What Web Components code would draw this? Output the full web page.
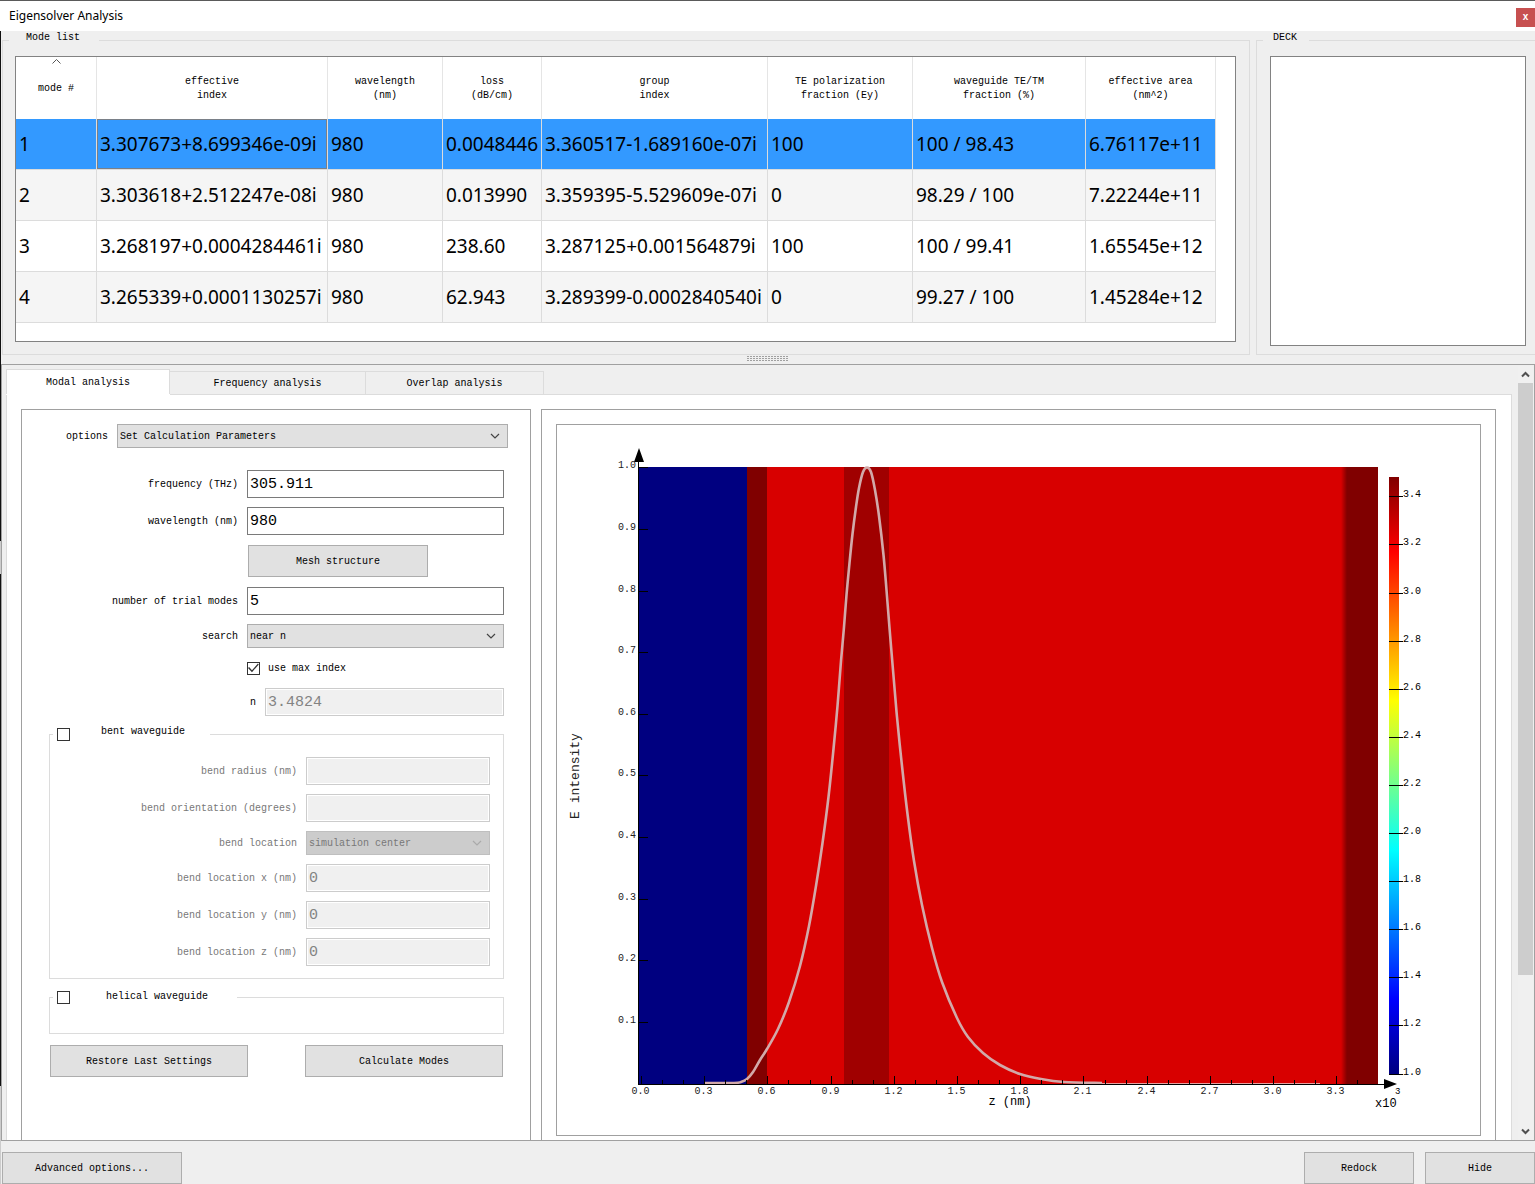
<!DOCTYPE html>
<html lang="en">
<head>
<meta charset="utf-8">
<title>Eigensolver Analysis</title>
<style>
  html, body { margin: 0; height: 100%; }
  body { background: #efefef; color: #000; font: 10px/14px "Liberation Mono", monospace; }
</style>
</head>
<body>
<eigen-app></eigen-app>

<script>
const define = (name, render) => customElements.define(name, class extends HTMLElement {
  connectedCallback() {
    if (this.shadowRoot) return;
    const root = this.attachShadow({ mode: 'open' });
    root.innerHTML = '<style>*{box-sizing:border-box}:host{display:block;box-sizing:border-box}</style>' + render(this);
  }
});

/* push button */
define('es-button', () => `
  <style>
    :host { width: 180px; height: 32px; flex: none; }
    button { width: 100%; height: 100%; padding: 2px 0 0; font: inherit; color: inherit;
      background: #e1e1e1; border: 1px solid #adadad; border-radius: 0; }
  </style>
  <button type="button"><slot></slot></button>`);

/* labelled text box or drop-down */
define('es-field', el => {
  const off = el.hasAttribute('disabled') ? 'disabled' : '';
  const value = el.getAttribute('value') || '';
  const control = el.hasAttribute('select')
    ? `<span class="combo"><select id="c" ${off}><option>${value}</option></select>
        <svg viewBox="0 0 10 6" width="10" height="6"><path d="M1 1l4 4 4-4" fill="none" stroke="currentColor" stroke-width="1.2"/></svg></span>`
    : `<input id="c" type="text" value="${value}" ${off}>`;
  return `
  <style>
    :host { display: flex; align-items: center; gap: 9px; }
    label { flex: 1; padding-top: 2px; text-align: right; white-space: nowrap; }
    :host([disabled]:not([dark-label])) label { color: #787878; }
    input { width: var(--field, 257px); height: 28px; margin: 0; padding: 0 2px; border: 1px solid #7a7a7a;
      background: #fff; color: #000; font: 15px "Liberation Mono", monospace; border-radius: 0; }
    input:disabled { background: #f0f0f0; border-color: #ccc; color: #838383; box-shadow: inset 0 0 0 1px #fff; }
    .combo { display: grid; align-items: center; width: var(--field, 257px); height: 24px; color: #444; }
    .combo > * { grid-area: 1 / 1; }
    .combo svg { justify-self: end; margin-right: 8px; pointer-events: none; }
    select { appearance: none; width: 100%; height: 100%; margin: 0; padding: 2px 2px 0; border: 1px solid #adadad;
      border-radius: 0; background: #e1e1e1; color: #000; font: inherit; font-size: 10px; }
    select:disabled { background: #ccc; border-color: #bfbfbf; color: #787878; opacity: 1; }
    select:disabled + svg { color: #aaa; }
  </style>
  <label for="c">${el.getAttribute('label')}</label>${control}`;
});

/* tick box, optionally with a caption */
define('es-check', el => `
  <style>
    :host { display: flex; }
    label { display: flex; align-items: center; gap: 8px; }
    label span { padding-top: 2px; }
    label.legend { gap: 0; }
    .legend span { padding: 0 var(--cap-end) var(--cap-lift, 0) var(--cap-start); }
    input { appearance: none; flex: none; width: 13px; height: 13px; margin: 0; border: 1px solid #333; background: #fff; }
    input:checked::before { content: ""; display: block; width: 11px; height: 11px; background: #333;
      clip-path: polygon(0 50%, 10% 42%, 36% 70%, 90% 10%, 98% 18%, 36% 88%); }
  </style>
  <label class="${el.hasAttribute('legend') ? 'legend' : ''}"><input type="checkbox" ${el.hasAttribute('checked') ? 'checked' : ''}><span><slot></slot></span></label>`);

/* framed group with its title on the top line */
define('es-group', () => `
  <style>
    fieldset { height: 100%; margin: 0; min-width: 0; border: 1px solid #dcdcdc; padding: var(--group-pad); }
    legend { display: flex; align-items: center; height: 18px; margin-left: var(--legend-x); padding: var(--legend-pad); }
  </style>
  <fieldset><legend><slot name="title"></slot></legend><slot></slot></fieldset>`);

/* table of modes */
const COLS = [[81, 'mode #'], [231, 'effective<br>index'], [115, 'wavelength<br>(nm)'], [99, 'loss<br>(dB/cm)'],
  [226, 'group<br>index'], [145, 'TE polarization<br>fraction (Ey)'], [173, 'waveguide TE/TM<br>fraction (%)'], [130, 'effective area<br>(nm^2)']];
const MODES = [
  ['1', '3.307673+8.699346e-09i', '980', '0.0048446', '3.360517-1.689160e-07i', '100', '100 / 98.43', '6.76117e+11'],
  ['2', '3.303618+2.512247e-08i', '980', '0.013990', '3.359395-5.529609e-07i', '0', '98.29 / 100', '7.22244e+11'],
  ['3', '3.268197+0.0004284461i', '980', '238.60', '3.287125+0.001564879i', '100', '100 / 99.41', '1.65545e+12'],
  ['4', '3.265339+0.0001130257i', '980', '62.943', '3.289399-0.0002840540i', '0', '99.27 / 100', '1.45284e+12']];
define('mode-table', () => `
  <style>
    :host { background: #fff; border: 1px solid #828282; padding-bottom: 18px; overflow: hidden; }
    table { border-collapse: separate; border-spacing: 0; table-layout: fixed; width: 1200px; }
    th { height: 62px; padding: 2px 0 0; font-weight: normal; border-right: 1px solid #e5e5e5; }
    .sort { display: grid; height: 60px; align-items: center; justify-items: center; }
    .sort > * { grid-area: 1 / 1; }
    .sort svg { align-self: start; }
    td { height: 51px; padding: 0 0 0 3px; white-space: nowrap; font: 19px/26px "Noto Sans", sans-serif;
      border-right: 1px solid #dcdcdc; border-bottom: 1px solid #dcdcdc; }
    tr:nth-child(even) td { background: #f5f5f5; }
    tr.on td { background: #39f; }
    td.focus { box-shadow: inset 0 0 0 1px #7a8088; }
  </style>
  <table>
    <colgroup>${COLS.map(c => `<col style="width:${c[0]}px">`).join('')}</colgroup>
    <thead><tr>${COLS.map((c, i) => `<th scope="col">${i ? c[1] : `<div class="sort"><svg width="9" height="5" viewBox="0 0 9 5"><path d="M.5 4.500l4-4 4 4" fill="none" stroke="#555"/></svg><span>${c[1]}</span></div>`}</th>`).join('')}</tr></thead>
    <tbody>${MODES.map((r, i) => `<tr class="${i ? '' : 'on'}">${r.map((v, j) => `<td class="${!i && j === 1 ? 'focus' : ''}">${v}</td>`).join('')}</tr>`).join('')}</tbody>
  </table>`);

/* field profile plotted over the index map */
const CURVE = [[704,1083],[734,1083],[741,1082],[747,1079],[753,1072],[760,1060],[767,1049],[778,1029],[789,1002],[800,966],
  [809,926],[816,886],[822.500,843],[828.500,797],[833.500,749],[837.500,706],[841,661],[844,627],[846.500,595],[849.500,563],
  [852.500,534],[856,507],[859,488],[863,472],[867,467.500],[871,472],[875,490],[879,516],[883.500,555],[886.500,590],[889.500,628],
  [893,670],[897,717],[902,766],[907.500,814],[914,861],[922,905],[932,948],[942,982],[957,1018],[968,1037],[983,1053],
  [1000,1065],[1020,1074],[1041,1079],[1064,1082],[1102,1083]];
const smooth = p => p.slice(1).reduce((d, q, i) => {
  const a = p[Math.max(i - 1, 0)], b = p[i], e = p[Math.min(i + 2, p.length - 1)];
  return d + `C${b[0] + (q[0] - a[0]) / 6} ${b[1] + (q[1] - a[1]) / 6} ${q[0] - (e[0] - b[0]) / 6} ${q[1] - (e[1] - b[1]) / 6} ${q[0]} ${q[1]}`;
}, `M${p[0]}`);
define('field-plot', () => {
  let yAxis = '', xAxis = '', bar = '';
  for (let i = 1; i <= 10; i++) {
    const y = Math.round(1083.7 - i * 61.65);
    yAxis += `<path d="M639 ${y + .5}h9" stroke="#000"/><text x="636" y="${y + 1}" text-anchor="end">${(i / 10).toFixed(1)}</text>`;
  }
  for (let i = 0; i <= 34; i++) {
    const x = Math.round(641 + i * 21.07) + .5;
    xAxis += `<path d="M${x} 1084v${i % 3 ? -4 : -8}" stroke="#000"/>`;
    if (i % 3 === 0) xAxis += `<text x="${x - 1}" y="1094" text-anchor="middle">${(i / 10).toFixed(1)}</text>`;
  }
  for (let i = 0; i <= 12; i++) {
    const y = Math.round(1073.5 - i * 48.1);
    bar += `<path d="M1389 ${y + .5}h14" stroke="#000"/><text x="1403" y="${y + 1}">${(1 + i / 5).toFixed(1)}</text>`;
  }
  return `
  <style>
    :host { background: #fff; border: 1px solid #a0a0a0; }
    svg { display: block; width: 100%; height: auto; font: 10px "Liberation Mono", monospace; }
  </style>
  <svg viewBox="557 425 923 710" role="img" aria-label="E intensity against z">
    <defs>
      <linearGradient id="jet" x1="0" y1="1" x2="0" y2="0">
        <stop offset="0" stop-color="#000080"/><stop offset=".125" stop-color="#00f"/><stop offset=".375" stop-color="#0ff"/>
        <stop offset=".625" stop-color="#ff0"/><stop offset=".875" stop-color="#f00"/><stop offset="1" stop-color="#800000"/>
      </linearGradient>
      <linearGradient id="edge"><stop offset="0" stop-color="#d80000"/><stop offset="1" stop-color="#800000"/></linearGradient>
    </defs>
    <g shape-rendering="crispEdges">
      <rect x="639" y="467" width="108" height="617" fill="#000080"/>
      <rect x="747" y="467" width="20" height="617" fill="#800000"/>
      <rect x="767" y="467" width="574" height="617" fill="#d80000"/>
      <rect x="844" y="467" width="45" height="617" fill="#a00000"/>
      <rect x="1341" y="467" width="6" height="617" fill="url(#edge)"/>
      <rect x="1347" y="467" width="31" height="617" fill="#800000"/>
      <rect x="1389" y="477" width="10" height="597" fill="url(#jet)"/>
    </g>
    <path d="M1100 1083.5h220" stroke="#e8a0a0" fill="none"/>
    <path d="${smooth(CURVE)}" fill="none" stroke="#d2a9a9" stroke-width="2.6"/>
    <path d="M638.5 460V1084.5M638 1084.5h748" stroke="#000"/>
    <path d="M639 448l5 14h-10zM1397 1084l-13-5v10z"/>
    <g fill="#222">${yAxis}${xAxis}</g>
    <g>${bar}</g>
    <text x="1010" y="1105" font-size="12" text-anchor="middle">z (nm)</text>
    <text x="1375" y="1107" font-size="12">x10</text>
    <text x="1395" y="1094" font-size="9">3</text>
    <text transform="translate(579 776) rotate(-90)" font-size="13" text-anchor="middle" fill="#222">E intensity</text>
  </svg>`;
});

/* calculation settings */
define('settings-form', () => `
  <style>
    :host { background: #fff; border: 1px solid #a0a0a0; padding: 14px 22px 14px 27px; }
    .options { --field: 391px; }
    .rows { display: flex; flex-direction: column; gap: 9px; padding: 22px 4px 0 0; }
    .mesh { display: flex; justify-content: flex-end; padding: 1px 76px 1px 0; }
    .max { display: flex; justify-content: flex-end; height: 22px; }
    .max es-check { width: 257px; }
    .n { --field: 239px; }
    es-group { --legend-pad: 0 0 0 4px; --field: 184px; }
    .bent { --legend-x: -9px; --group-pad: 14px 13px 12px 12px; --cap-start: 31px; --cap-end: 25px; --cap-lift: 4px; }
    .bent div { display: flex; flex-direction: column; gap: 9px; }
    .helical { --legend-x: 3px; --group-pad: 27px 0 0; --cap-start: 36px; --cap-end: 29px; }
    .actions { display: flex; justify-content: space-between; padding: 2px 1px; }
    .actions es-button { width: 198px; }
  </style>
  <es-field class="options" select label="options" value="Set Calculation Parameters"></es-field>
  <div class="rows">
    <es-field label="frequency (THz)" value="305.911"></es-field>
    <es-field label="wavelength (nm)" value="980"></es-field>
    <div class="mesh"><es-button>Mesh structure</es-button></div>
    <es-field label="number of trial modes" value="5"></es-field>
    <es-field select label="search" value="near n"></es-field>
    <div class="max"><es-check checked>use max index</es-check></div>
    <es-field class="n" disabled dark-label label="n" value="3.4824"></es-field>
    <es-group class="bent">
      <es-check slot="title" legend>bent waveguide</es-check>
      <div>
        <es-field disabled label="bend radius (nm)"></es-field>
        <es-field disabled label="bend orientation (degrees)"></es-field>
        <es-field disabled select label="bend location" value="simulation center"></es-field>
        <es-field disabled label="bend location x (nm)" value="0"></es-field>
        <es-field disabled label="bend location y (nm)" value="0"></es-field>
        <es-field disabled label="bend location z (nm)" value="0"></es-field>
      </div>
    </es-group>
    <es-group class="helical"><es-check slot="title" legend>helical waveguide</es-check></es-group>
    <div class="actions"><es-button>Restore Last Settings</es-button><es-button>Calculate Modes</es-button></div>
  </div>`);

/* tab strip */
define('analysis-tabs', () => `
  <style>
    :host { padding: 4px 0 0 4px; }
    nav { display: flex; align-items: flex-end; height: 25px; }
    button { height: 23px; margin: 0; padding: 2px 0 0; border: 1px solid #dcdcdc; border-width: 1px 1px 0 0; background: #efefef;
      font: inherit; color: inherit; }
    button[aria-selected=true] { height: 25px; background: #fff; border-left-width: 1px; }
    .pane { display: grid; grid-template-columns: 510px minmax(0, 1fr); gap: 10px; padding: 14px 15px 14px 14px; background: #fff;
      border: 1px solid #dcdcdc; border-top: 0; }
    .rule { display: flex; }
    .rule i { height: 1px; background: #dcdcdc; flex: 1; }
    .rule i:first-child { flex: 0 0 164px; background: #fff; }
    .plot { border: 1px solid #a0a0a0; padding: 14px; }
  </style>
  <nav role="tablist">
    <button role="tab" aria-selected="true" style="width:164px">Modal analysis</button>
    <button role="tab" aria-selected="false" style="width:196px">Frequency analysis</button>
    <button role="tab" aria-selected="false" style="width:178px">Overlap analysis</button>
  </nav>
  <div class="rule"><i></i><i></i></div>
  <div class="pane"><settings-form></settings-form><div class="plot"><field-plot></field-plot></div></div>`);

/* vertical scroll bar */
define('scroll-bar', () => `
  <style>
    :host { display: flex; flex-direction: column; width: 15px; background: #f0f0f0; }
    button { flex: none; height: 17px; padding: 0; border: 0; background: none; }
    .track { flex: 1; }
    .thumb { height: 80%; background: #cdcdcd; }
    svg { display: block; margin: auto; }
  </style>
  <button type="button" aria-label="Scroll up"><svg width="9" height="7" viewBox="0 0 9 7"><path d="M1 5.500l3.500-3.500 3.500 3.500" fill="none" stroke="#505050" stroke-width="2"/></svg></button>
  <div class="track"><div class="thumb"></div></div>
  <button type="button" aria-label="Scroll down"><svg width="9" height="7" viewBox="0 0 9 7"><path d="M1 1.500l3.500 3.500 3.500-3.500" fill="none" stroke="#505050" stroke-width="2"/></svg></button>`);

/* window */
define('eigen-app', () => `
  <style>
    :host { display: flex; flex-direction: column; height: 100vh; overflow: hidden; border-top: 1px solid #5a5a5a; }
    header { flex: none; display: flex; justify-content: space-between; align-items: center; height: 30px; padding-left: 9px; background: #fff;
      font: 12px/18px "Noto Sans", sans-serif; }
    header button { align-self: flex-start; width: 19px; height: 19px; margin-top: 7px; padding: 0 0 2px; border: 0; background: #c75050; color: #fff;
      font: bold 10px/14px "Liberation Sans", sans-serif; }
    .body { flex: 1; min-height: 0; display: grid; grid-template-columns: 1px minmax(0, 1fr); }
    .edge { background: linear-gradient(#111 0 510px, #ccc 510px 543px, #111 543px 1055px, #ccc 1055px); }
    main { display: flex; flex-direction: column; min-height: 0; }
    .top { flex: none; display: grid; grid-template-columns: minmax(0, 1fr) 280px; gap: 6px; margin-right: -1px; padding-left: 1px; height: 323px; }
    .modes { --legend-x: -6px; --group-pad: 7px 13px 12px 12px; --legend-pad: 0 19px 4px 17px; }
    .deck { --legend-x: -7px; --group-pad: 7px 9px 7px 13px; --legend-pad: 0 12px 4px 10px; }
    .list { height: 290px; background: #fff; border: 1px solid #828282; }
    .grip { flex: none; height: 10px; display: flex; align-items: center; justify-content: center; }
    .scroll { flex: 1; min-height: 0; display: flex; border: 1px solid #a0a0a0; overflow: hidden; }
    .scroll analysis-tabs { flex: 1; min-width: 0; }
    .scroll scroll-bar { margin: 1px 1px 0 6px; }
    footer { flex: none; display: flex; gap: 11px; height: 43px; padding: 11px 0 0 1px; }
    footer .small { width: 110px; }
    footer .first { margin-left: auto; }
  </style>
  <header><span>Eigensolver Analysis</span><button type="button" aria-label="Close">x</button></header>
  <div class="body">
    <div class="edge"></div>
    <main>
      <div class="top">
        <es-group class="modes"><span slot="title">Mode list</span><mode-table></mode-table></es-group>
        <es-group class="deck"><span slot="title">DECK</span><div class="list"></div></es-group>
      </div>
      <div class="grip"><svg width="42" height="6" viewBox="0 0 42 6" shape-rendering="crispEdges"><path d="M0 .5h42M0 2.500h42M0 4.500h42" stroke="#a0a0a0" stroke-dasharray="2 1"/></svg></div>
      <div class="scroll"><analysis-tabs></analysis-tabs><scroll-bar></scroll-bar></div>
      <footer><es-button>Advanced options...</es-button><es-button class="small first">Redock</es-button><es-button class="small">Hide</es-button></footer>
    </main>
  </div>`);
</script>
</body>
</html>
